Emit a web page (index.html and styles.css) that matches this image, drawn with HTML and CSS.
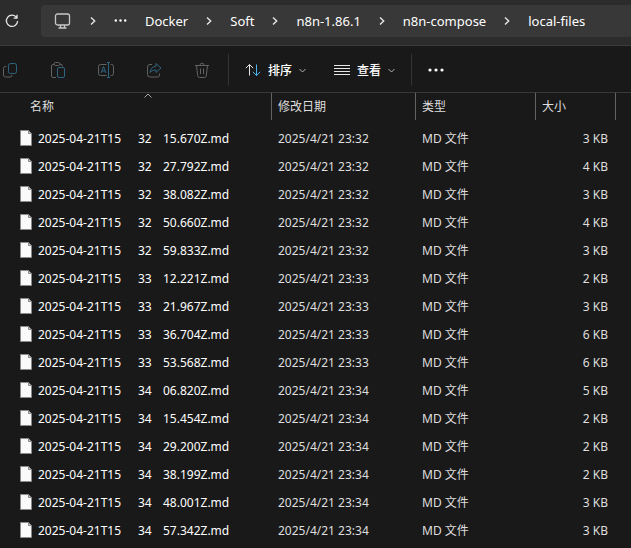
FILE: index.html
```
<!DOCTYPE html>
<html lang="zh-CN">
<head>
    <meta charset="utf-8">
    <title>local-files</title>
    <link rel="stylesheet" href="styles.css">
</head>
<body>
    <header class="address">
        <button class="refresh" aria-label="刷新">
            <svg width="14" height="14" viewBox="0 0 14 14"><path d="M11.6 3.6A5.6 5.6 0 1 0 12.6 7M12 .8v3.4H8.6"/></svg>
        </button>
        <nav class="crumbs">
            <a href="#" aria-label="此电脑"><svg class="pc" width="18" height="16" viewBox="0 0 18 16"><rect x="1.500" y="1" width="14" height="11" rx="2"/><path d="M6.500 12v3M10.500 12v3M4.500 15h8"/></svg></a>
            <svg class="chev" width="6" height="10" viewBox="0 0 6 10"><path d="M1 1.5 4.7 5 1 8.5"/></svg>
            <button class="more" aria-label="更多"><svg width="13" height="4" viewBox="0 0 13 4"><circle cx="1.8" cy="1.500" r="1.2"/><circle cx="6.5" cy="1.500" r="1.2"/><circle cx="11.2" cy="1.500" r="1.2"/></svg></button>
            <a href="#">Docker</a>
            <svg class="chev" width="6" height="10" viewBox="0 0 6 10"><path d="M1 1.5 4.7 5 1 8.5"/></svg>
            <a href="#">Soft</a>
            <svg class="chev" width="6" height="10" viewBox="0 0 6 10"><path d="M1 1.5 4.7 5 1 8.5"/></svg>
            <a href="#">n8n-1.86.1</a>
            <svg class="chev" width="6" height="10" viewBox="0 0 6 10"><path d="M1 1.5 4.7 5 1 8.5"/></svg>
            <a href="#">n8n-compose</a>
            <svg class="chev" width="6" height="10" viewBox="0 0 6 10"><path d="M1 1.5 4.7 5 1 8.5"/></svg>
            <a href="#">local-files</a>
        </nav>
    </header>

    <div class="toolbar">
        <div class="actions">
            <button disabled aria-label="复制"><svg width="16" height="16" viewBox="0 0 16 16"><path class="grey" d="M4.500 4.500H3.500a2 2 0 0 0-2 2v6.500a2 2 0 0 0 2 2h4.500a2 2 0 0 0 2-2"/><rect class="blue" x="6.500" y="1.500" width="8" height="10" rx="2"/></svg></button>
            <button disabled aria-label="粘贴"><svg width="16" height="16" viewBox="0 0 16 16"><path class="grey" d="M4 2.500H3A1.500 1.500 0 0 0 1.500 4v10A1.500 1.500 0 0 0 3 15.500H6M10 2.500h1A1.500 1.500 0 0 1 12.500 4v.500"/><rect class="grey" x="4" y=".5" width="6" height="3" rx="1.500"/><rect class="blue" x="7.500" y="5.500" width="7" height="10" rx="1.500"/></svg></button>
            <button disabled aria-label="重命名"><svg width="18" height="16" viewBox="0 0 18 16"><path class="grey" d="M9.500 2.500h-6a2 2 0 0 0-2 2v7a2 2 0 0 0 2 2h6M13.500 2.500h1a2 2 0 0 1 2 2v7a2 2 0 0 1-2 2h-1"/><path class="blue" d="M4 11 6.500 4.500 9 11M5 9h3M11.500 1v14M10 .5h3M10 15.500h3"/></svg></button>
            <button disabled aria-label="共享"><svg width="16" height="16" viewBox="0 0 16 16"><path class="grey" d="M6 2.500H4a2.500 2.500 0 0 0-2.500 2.500v7.500A2.500 2.500 0 0 0 4 15h7.500a2 2 0 0 0 2-2v-1.500"/><path class="blue" d="M10 1.500 15 6l-5 4.500V8C7 8 5.200 9 4 10.500 4.300 7 6.500 4.500 10 4.200Z"/></svg></button>
            <button disabled aria-label="删除"><svg width="16" height="16" viewBox="0 0 16 16"><path class="grey" d="M1 3.500h14M6 3.200a2 2 0 0 1 4 0M2.500 3.500l1.200 10A2 2 0 0 0 5.600 15.500h4.800a2 2 0 0 0 1.900-2l1.200-10M6.500 6.500v5.500M9.500 6.500v5.500"/></svg></button>
        </div>
        <div class="group">
            <button class="drop">
                <svg width="16" height="14" viewBox="0 0 16 14"><path class="white" d="M4.500 12.500V1.500M.8 5.200l3.700-3.700L8.200 5.200"/><path class="sky" d="M11.500 1.500v11M7.800 8.800l3.700 3.700 3.700-3.700"/></svg>
                <span>排序</span>
                <svg class="down" width="7" height="5" viewBox="0 0 7 5"><path d="M.5 1 3.500 4 6.500 1"/></svg>
            </button>
            <button class="drop">
                <svg width="16" height="12" viewBox="0 0 16 12"><path class="white" d="M0 1.500h16M0 4.500h16M0 7.500h16M0 10.500h16"/></svg>
                <span>查看</span>
                <svg class="down" width="7" height="5" viewBox="0 0 7 5"><path d="M.5 1 3.500 4 6.500 1"/></svg>
            </button>
        </div>
        <button class="more" aria-label="查看更多"><svg width="16" height="4" viewBox="0 0 16 4"><circle cx="2" cy="2" r="1.600"/><circle cx="8" cy="2" r="1.600"/><circle cx="14" cy="2" r="1.600"/></svg></button>
    </div>

    <table class="files">
        <colgroup>
            <col class="col-name">
            <col class="col-date">
            <col class="col-type">
            <col class="col-size">
            <col>
        </colgroup>
        <thead>
            <tr>
                <th class="name" aria-sort="ascending"><div>名称<svg class="sorted" width="8" height="5" viewBox="0 0 8 5"><path d="M.5 4.500 4 1l3.500 3.500"/></svg></div></th>
                <th><div>修改日期</div></th>
                <th><div>类型</div></th>
                <th><div>大小</div></th>
                <td></td>
            </tr>
        </thead>
        <tbody id="rows"></tbody>
    </table>

    <script src="files.js"></script>
</body>
</html>
```
FILE: styles.css
```
body {
    margin: 0;
    background: #191919;
    color: #fff;
    font-family: "Noto Sans", "Noto Sans CJK SC", sans-serif;
    font-size: 12px;
    overflow: hidden;
}
button {
    display: flex;
    align-items: center;
    padding: 0;
    border: 0;
    background: none;
    color: inherit;
    font: inherit;
}
svg {
    display: block;
    flex: none;
    fill: none;
    stroke: #e6e6e6;
}

/* address bar */
.address {
    display: flex;
    align-items: center;
    gap: 22px;
    height: 46px;
    padding: 0 0 3px 5px;
    box-sizing: border-box;
    background: #2c2c2c;
    border-bottom: 1px solid #3b3b3b;
}
.refresh svg {
    stroke-width: 1.3;
}
.crumbs {
    flex: 1;
    display: flex;
    align-items: center;
    gap: 18px;
    height: 32px;
    padding-left: 13px;
    background: #383838;
    border-radius: 4px 0 0 4px;
    font-size: 13px;
    white-space: nowrap;
}
.crumbs a {
    color: #fff;
    text-decoration: none;
}
.pc {
    stroke: #c8c8c8;
    stroke-width: 1.3;
}
.chev {
    stroke-width: 1.4;
}
.more svg {
    fill: #fff;
    stroke: none;
}

/* command bar */
.toolbar {
    display: flex;
    align-items: center;
    height: 44px;
    padding-top: 2px;
    border-bottom: 1px solid #3b3b3b;
}
.actions {
    display: flex;
    gap: 16px;
    margin-left: -6px;
    padding-right: 10px;
}
.actions button {
    justify-content: center;
    width: 32px;
    height: 32px;
}
.grey {
    stroke: #626262;
}
.blue {
    stroke: #2f6480;
}
.white {
    stroke: #e6e6e6;
}
.sky {
    stroke: #4cb5f0;
}
.group {
    display: flex;
    gap: 28px;
    height: 32px;
    padding: 0 16px;
    border: solid #333;
    border-width: 0 1px;
    margin-right: 16px;
}
.drop {
    gap: 7px;
}
.drop span {
    font-weight: 500;
}
.down {
    stroke: #b4b4b4;
}

/* file list */
.files {
    width: 100%;
    table-layout: fixed;
    border-collapse: collapse;
}
.col-name {
    width: 272px;
}
.col-date {
    width: 144px;
}
.col-type {
    width: 120px;
}
.col-size {
    width: 80px;
}
.files th {
    padding: 0 0 4px;
    color: #dedede;
    font-weight: normal;
    text-align: left;
}
.files th div {
    position: relative;
    height: 27px;
    line-height: 27px;
    padding-left: 6px;
    border-right: 1px solid #636363;
}
.files th.name div {
    padding-left: 30px;
}
.sorted {
    position: absolute;
    top: 0;
    left: 144px;
    stroke: #a8a8a8;
}
.files td {
    height: 28px;
    padding: 0 0 0 6px;
    color: #dedede;
    white-space: pre;
}
.files thead td {
    height: auto;
}
.files .size {
    padding: 0 8px 0 0;
    text-align: right;
}
.file {
    display: grid;
    grid-template-columns: 18px 100px 25px auto;
    align-items: center;
    padding-left: 14px;
    color: #fff;
}
.page {
    fill: #fafafa;
    stroke: #8a8a8a;
}
.page .fold {
    fill: #c4c4c4;
}
```
FILE: files.js
```
const files = [
    ['32', '15.670Z', 3],
    ['32', '27.792Z', 4],
    ['32', '38.082Z', 3],
    ['32', '50.660Z', 4],
    ['32', '59.833Z', 3],
    ['33', '12.221Z', 2],
    ['33', '21.967Z', 3],
    ['33', '36.704Z', 6],
    ['33', '53.568Z', 6],
    ['34', '06.820Z', 5],
    ['34', '15.454Z', 2],
    ['34', '29.200Z', 2],
    ['34', '38.199Z', 2],
    ['34', '48.001Z', 3],
    ['34', '57.342Z', 3]
];

const icon = '<svg class="page" width="12" height="16" viewBox="0 0 12 16"><path d="M.5.5h8l3 3v12H.5z"/><path class="fold" d="M8.500.5v3h3z"/></svg>';

document.getElementById('rows').innerHTML = files.map(([min, sec, size]) => `
    <tr>
        <td><div class="file">${icon}<span>2025-04-21T15</span><span>${min}</span><span>${sec}.md</span></div></td>
        <td>2025/4/21 23:${min}</td>
        <td>MD 文件</td>
        <td class="size">${size} KB</td>
        <td></td>
    </tr>`).join('');
```
